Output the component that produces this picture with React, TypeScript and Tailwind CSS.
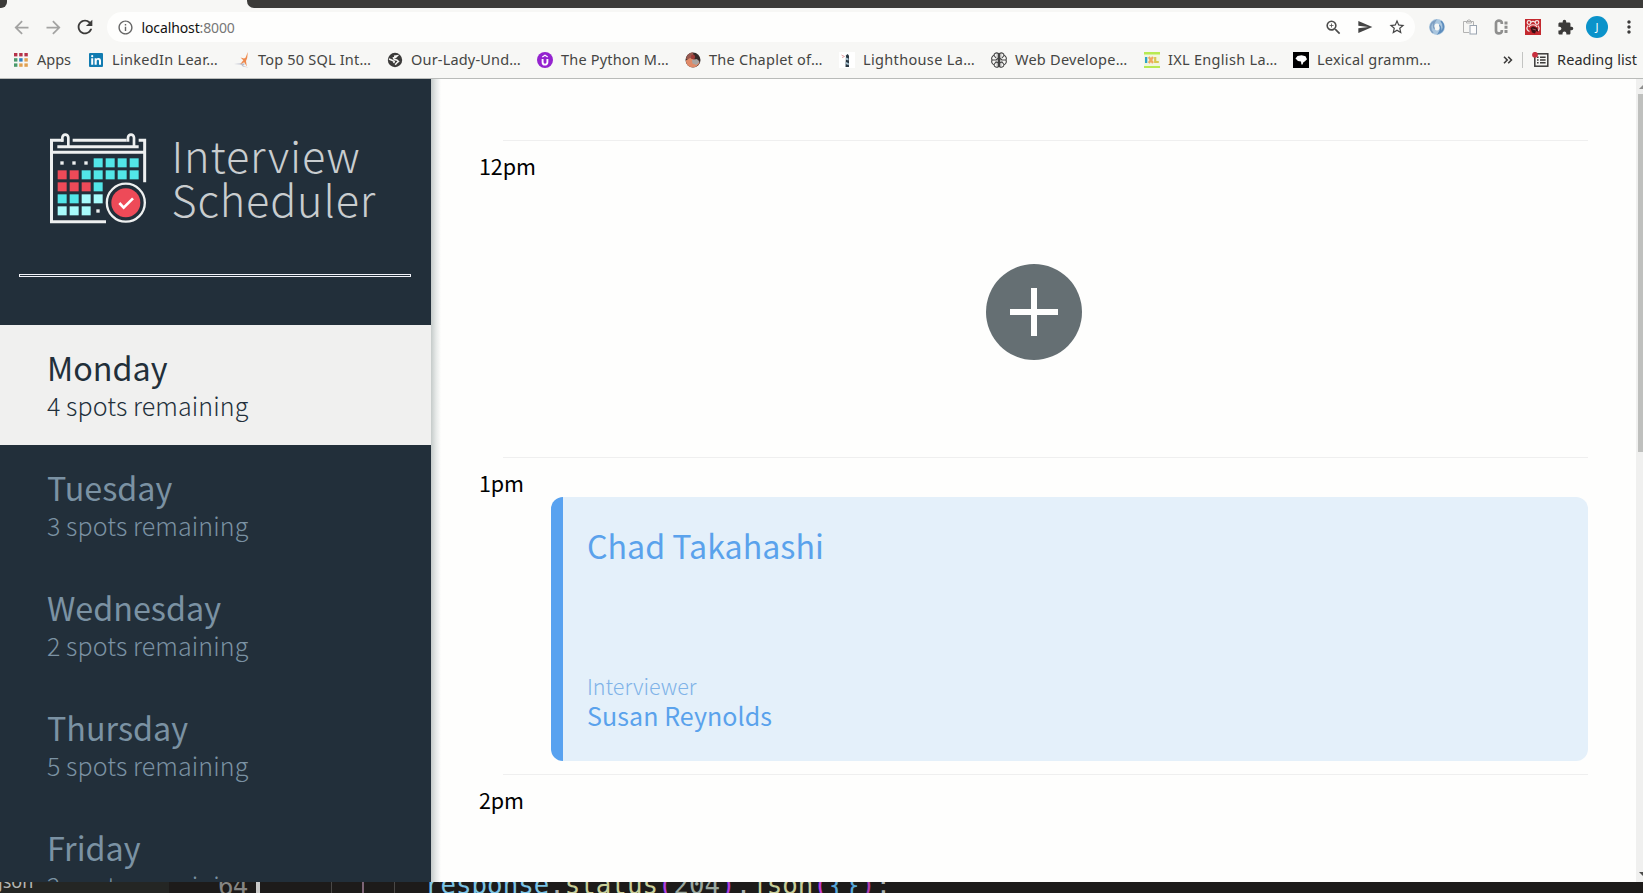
import type { ReactNode } from 'react';
import {
  MdArrowBack,
  MdArrowForward,
  MdRefresh,
  MdInfoOutline,
  MdZoomIn,
  MdSend,
  MdStarBorder,
  MdExtension,
  MdMoreVert,
} from 'react-icons/md';

const UI = "font-['Noto_Sans',sans-serif]";
const APP = "font-['Noto_Sans_CJK_SC',sans-serif]";

function Cell({ children }: { children: ReactNode }) {
  return <div className="flex w-8 shrink-0 items-center justify-center">{children}</div>;
}

function AppsIcon() {
  const colors = ['#b5324a', '#b5324a', '#b5324a', '#4a9a6a', '#2f7fc0', '#e0a050', '#4a9a6a', '#e0a050', '#e0a050'];
  return (
    <svg width="16" height="16" viewBox="0 0 16 16">
      {colors.map((c, i) => (
        <rect key={i} x={1 + (i % 3) * 5.2} y={1 + Math.floor(i / 3) * 5.2} width="3.4" height="3.4" fill={c} />
      ))}
    </svg>
  );
}

function LinkedInIcon() {
  return (
    <svg width="16" height="16" viewBox="0 0 16 16">
      <rect x="1" y="1" width="14" height="14" rx="1" fill="#127cb1" />
      <path d="M3.2 6.2h2v6.6h-2zM3.1 4.2a1.1 1.1 0 1 0 2.2 0a1.1 1.1 0 1 0-2.2 0M6.6 6.2h1.9v.9c.9-1.5 4.5-1.6 4.5 1.6v4.1h-2V9.2c0-1.900-2.300-1.700-2.300 0v3.600h-2.100z" fill="#fff" />
    </svg>
  );
}

function FigureIcon() {
  return (
    <svg width="16" height="16" viewBox="0 0 16 16">
      <path d="M0 12l8-.8 3 .5-2 2.300 6 1.500-6-.8-2-2.200z" fill="#b9bccb" />
      <path d="M13.800 0l-.6 6-1.200 3 .8 5.500-2.600-4.300-4.200 2.300 3.300-4.200L6.500 5.500l3.500 1 1.500-.8z" fill="#ee8a4e" />
    </svg>
  );
}

function GlobeIcon() {
  return (
    <svg width="16" height="16" viewBox="0 0 16 16">
      <circle cx="8" cy="8" r="7.200" fill="#3c3b3a" />
      <path d="M7 4.200l3.200-.4-1.700 1.700-2 .4.800 1.700 2.500.3 1.700 1.600-1.800 1.500-1.500 1.800M2 7l3 1.200 2.200 1.300-.4 1.700" fill="none" stroke="#f7f7f5" strokeWidth="1.500" />
    </svg>
  );
}

function UdemyIcon() {
  return (
    <svg width="16" height="16" viewBox="0 0 16 16">
      <circle cx="8" cy="8" r="8" fill="#9423cf" />
      <path d="M5.600 7v3.200c0 3.200 4.800 3.200 4.800 0V7" fill="none" stroke="#fff" strokeWidth="1.900" />
      <path d="M5.300 4.900L8 3.300l2.700 1.600" fill="none" stroke="#fff" strokeWidth="1.200" />
    </svg>
  );
}

function PortraitIcon() {
  return (
    <svg width="16" height="16" viewBox="0 0 16 16">
      <circle cx="8" cy="8" r="7.500" fill="#352a29" />
      <path d="M1 7c1-5 4-6.500 7-6.500L9 5 5 8z" fill="#9a5a50" />
      <path d="M.8 8.500L5 6l4 1.500 4.500 1 1 2c-2 5-6 5-8 4.800C3 14.500 1 12 .8 8.500z" fill="#e08a68" />
      <path d="M7 8l5-1 2.500 3-3 3-4-1.500z" fill="#a8a4a2" />
      <circle cx="8" cy="5" r="2.200" fill="#a03c38" />
    </svg>
  );
}

function LighthouseIcon() {
  return (
    <svg width="16" height="16" viewBox="0 0 16 16">
      <rect width="16" height="16" fill="#fff" />
      <path d="M2.500 3l3 1.500-2.500 1" fill="none" stroke="#e3a5a8" strokeWidth="1" />
      <path d="M7 3.500L8.500 2 10 3.500V15H6.500z" fill="#2a3843" />
      <path d="M7 5.500l2.500 1v2l-2.500-.8zM7 10l2.800 1.200v2L6.700 12z" fill="#a9c4d2" />
    </svg>
  );
}

function BrainIcon() {
  return (
    <svg width="16" height="16" viewBox="0 0 16 16">
      <rect x="5.500" y="1.500" width="5" height="13" fill="#bdbdbc" />
      <g fill="none" stroke="#444" strokeWidth="1.100">
        <path d="M7.500 1.500C5 0 3 1.500 3 3.300.8 4 .2 6.500 1 8c-.8 2 0 4 2 4.700C3.200 15 6 16 7.500 14.500z" />
        <path d="M8.500 1.500C11 0 13 1.500 13 3.300c2.200.7 2.800 3.200 2 4.700.8 2 0 4-2 4.700C12.800 15 10 16 8.500 14.500z" />
        <path d="M3 3.500l2 2.500M1 8h4l2.500-2M3 12.500L5 10l2.500 1M13 3.500L11 6M15 8h-4L8.500 6M13 12.500L11 10l-2.500 1" />
      </g>
    </svg>
  );
}

function IxlIcon() {
  return (
    <svg width="16" height="16" viewBox="0 0 16 16">
      <rect width="16" height="16" fill="#f1f6df" />
      <rect width="16" height="2.500" fill="#b7ea52" />
      <rect y="14" width="16" height="2" fill="#b7ea52" />
      <rect x="1" y="5" width="2.300" height="6" fill="#2fa3c8" />
      <path d="M4.800 5l4.200 6M9 5l-4.200 6" stroke="#f0a860" strokeWidth="2.200" />
      <path d="M11.200 5v5h3.600" fill="none" stroke="#d8c850" strokeWidth="2.200" />
    </svg>
  );
}

function LexicalIcon() {
  return (
    <svg width="16" height="16" viewBox="0 0 16 16">
      <rect width="16" height="16" fill="#000" />
      <path d="M2.500 6.500L4.500 4l4-.8 4 1 1.500 3-2 2-1.800 1.200-.6 2.100H8.400L8 9.500 5 9z" fill="#fff" />
    </svg>
  );
}

const bookmarks: { label: string; icon: ReactNode; box: string; text: string }[] = [
  { label: 'Apps', icon: <AppsIcon />, box: 'w-[75px]', text: '' },
  { label: 'LinkedIn Lear…', icon: <LinkedInIcon />, box: 'w-[146px]', text: 'tracking-[0.3px]' },
  { label: 'Top 50 SQL Int…', icon: <FigureIcon />, box: 'w-[153px]', text: 'tracking-[0.2px]' },
  { label: 'Our-Lady-Und…', icon: <GlobeIcon />, box: 'w-[150px]', text: 'tracking-[0.18px]' },
  { label: 'The Python M…', icon: <UdemyIcon />, box: 'w-[148px]', text: 'tracking-[0.18px]' },
  { label: 'The Chaplet of…', icon: <PortraitIcon />, box: 'w-[154px]', text: 'tracking-[0.25px]' },
  { label: 'Lighthouse La…', icon: <LighthouseIcon />, box: 'w-[152px]', text: 'tracking-[0.34px]' },
  { label: 'Web Develope…', icon: <BrainIcon />, box: 'w-[153px]', text: 'tracking-[0.25px]' },
  { label: 'IXL English La…', icon: <IxlIcon />, box: 'w-[149px]', text: 'tracking-[0.3px]' },
  { label: 'Lexical gramm…', icon: <LexicalIcon />, box: 'w-[146px]', text: 'tracking-[0.22px]' },
];

function BrowserChrome() {
  return (
    <header className={`${UI} h-[79px] shrink-0 border-b border-[#b9bbb9] bg-[#f7f7f5]`}>
      <div className="flex h-2 justify-between">
        <div className="w-[7px] rounded-br-[6px] bg-[#3c3b39]" />
        <div className="w-[1396px] rounded-bl-[7px] bg-[#3c3b39]" />
      </div>
      <div className="flex h-[38px] items-center overflow-hidden pl-[5px] text-[#3c3b3a]">
        <Cell><MdArrowBack size={21} color="#a3a3a2" /></Cell>
        <Cell><MdArrowForward size={21} color="#a3a3a2" /></Cell>
        <Cell><MdRefresh size={22} /></Cell>
        <div className="ml-1.5 flex h-[30px] w-[1308px] shrink-0 items-center rounded-full bg-[#fefefd] pr-0.5">
          <MdInfoOutline size={17} color="#666" className="ml-[9.500px]" />
          <span className="ml-2 flex-1 text-[14px] tracking-[-0.12px] text-[#111]">
            localhost<span className="text-[#777]">:8000</span>
          </span>
          <Cell><MdZoomIn size={19} color="#4c4c4b" /></Cell>
          <Cell><MdSend size={16} color="#444" /></Cell>
          <Cell><MdStarBorder size={18} color="#444" /></Cell>
        </div>
        <div className="ml-1.5 flex shrink-0">
          <Cell>
            <svg width="16" height="16" viewBox="0 0 16 16">
              <circle cx="8" cy="8" r="5.400" fill="none" stroke="#a9c6df" strokeWidth="5" />
              <path d="M4 14C0 10 1 4 6 2c-2 3-2 6 0 8" fill="none" stroke="#7f9fc2" strokeWidth="1.600" />
              <path d="M12 2c4 4 3 10-2 12 2-3 2-6 0-8" fill="none" stroke="#5d8dbd" strokeWidth="1.600" />
              <ellipse cx="8" cy="8" rx="2.300" ry="3.400" fill="#f7f7f5" />
            </svg>
          </Cell>
          <Cell>
            <svg width="16" height="16" viewBox="0 0 16 16" fill="none" stroke="#b3b3b2" className="ml-0.5">
              <path d="M7 13.500H1.500v-11h10V6M4.500 4V2.500L6 1h2l1.500 1.500V4z" />
              <rect x="8" y="6.500" width="6.500" height="8.500" stroke="#9aa4b0" fill="#fdfdfd" />
            </svg>
          </Cell>
          <Cell>
            <svg width="16" height="16" viewBox="0 0 16 16" fill="none">
              <path d="M8.800 5V3.800C8.800 1 3 .8 3 4v8c0 3.200 5.800 3 5.800.2V11" stroke="#8f8f8e" strokeWidth="2.700" />
              <path d="M13 2.500v3M13 6.700v3M13 10.900v3" stroke="#8f8f8e" strokeWidth="3" />
            </svg>
          </Cell>
          <Cell>
            <svg width="16" height="16" viewBox="0 0 16 16">
              <rect width="16" height="16" fill="#c4292f" />
              <g fill="none" stroke="#f3e3e2" strokeWidth="1.200">
                <circle cx="4" cy="3.500" r="1.800" />
                <circle cx="12" cy="3.500" r="1.800" />
                <path d="M3 6.500c-2 3-1 5 1.500 6M13 6.500c1.500 2 1.300 4 0 5.500M6 3.500c1-1.500 3-1.500 4 0M4 8c1-3 7-3 8 0" />
              </g>
              <path d="M5.500 9L8 7.500l4 1.500 1.500 4-2.500-1-1 2.500-3-1z" fill="#3a1015" />
              <path d="M7.500 10l3.500 1" stroke="#a05a5a" />
            </svg>
          </Cell>
          <Cell><MdExtension size={17} color="#3c3b3a" /></Cell>
          <Cell>
            <div className="flex size-[22px] items-center justify-center rounded-full bg-[#0b93ca] text-[11px] text-white">J</div>
          </Cell>
          <Cell><MdMoreVert size={20} /></Cell>
        </div>
      </div>
      <nav className="flex h-7 items-center pl-[13px] text-[14.500px] whitespace-nowrap text-[#454543]">
        {bookmarks.map((b) => (
          <div key={b.label} className={`flex shrink-0 items-center gap-2 ${b.box}`}>
            <span className="shrink-0">{b.icon}</span>
            <span className={b.text}>{b.label}</span>
          </div>
        ))}
        <div className="ml-auto flex items-center pr-[6px] text-[#2b2b2a]">
          <svg width="10" height="8" viewBox="0 0 10 8" fill="none" stroke="#3c3b3a" strokeWidth="1.600">
            <path d="M1 .8L4.200 4 1 7.200M5.200.8L8.400 4 5.200 7.200" />
          </svg>
          <div className="ml-[9px] h-4 w-px bg-[#c3c4c2]" />
          <svg className="mr-2 ml-[9px]" width="17" height="16" viewBox="0 0 17 16">
            <rect x="2.800" y="1.800" width="13" height="12.400" fill="none" stroke="#3c3b3a" strokeWidth="1.500" />
            <path d="M5 5.200h1.600M5 8h1.600M5 10.800h1.600M8 5.200h5.600M8 8h5.600M8 10.800h5.600" stroke="#3c3b3a" strokeWidth="1.400" />
            <circle cx="3" cy="2.800" r="2.900" fill="#c8303f" />
          </svg>
          <span className="tracking-[0.05px]">Reading list</span>
        </div>
      </nav>
    </header>
  );
}

const cellRows = ['...cccc', 'rrccccc', 'rrrc', 'ccll', 'lll.'];
const cellFill: Record<string, string> = { c: '#52e6e8', r: '#ee4a58', l: '#a8fbfb' };

function CalendarLogo() {
  return (
    <svg width="100" height="96" viewBox="144 90 300 288" className="shrink-0">
      <g fill="none" stroke="#eef0f0" strokeWidth="9">
        <path d="M190 121H154.500V365H318M416 121H434V247M218 121H380M172 140H416M154 157H434" />
        <path d="M187 125v-12a8 8 0 0 1 18 0v27M384 125v-12a8 8 0 0 1 18 0v27" strokeWidth="8" />
      </g>
      {cellRows.map((row, r) =>
        row.split('').map((k, c) =>
          k === '.' ? (
            <rect key={`${r}-${c}`} x={181 + c * 36} y={184 + r * 36} width="10" height="10" fill="#eef0f0" />
          ) : (
            <rect key={`${r}-${c}`} x={173 + c * 36} y={175 + r * 36} width="27" height="27" fill={cellFill[k]} />
          ),
        ),
      )}
      <circle cx="377.500" cy="308" r="57" fill="#222f3a" stroke="#eef0f0" strokeWidth="7" />
      <circle cx="377.500" cy="308" r="43.500" fill="#ee4a58" />
      <path d="M358 309l13 14 28-28" fill="none" stroke="#fff" strokeWidth="8" />
    </svg>
  );
}

const days = [
  { name: 'Monday', spots: '4 spots remaining', selected: true },
  { name: 'Tuesday', spots: '3 spots remaining' },
  { name: 'Wednesday', spots: '2 spots remaining' },
  { name: 'Thursday', spots: '5 spots remaining' },
  { name: 'Friday', spots: '2 spots remaining' },
];

function Sidebar() {
  return (
    <aside className="z-10 w-[431px] shrink-0 overflow-hidden bg-[#222f3a]">
      <div className="flex h-[195px] pt-[51px] pl-12">
        <CalendarLogo />
        <div className="ml-[23.500px] pt-0.5 text-[43.200px] leading-[44px] font-light text-[#c9cdcf]">
          <div className="tracking-[0.850px]">Interview</div>
          <div className="tracking-[0.850px]">Scheduler</div>
        </div>
      </div>
      <div className="mx-[19px] h-[3px] w-[392px] border border-[#f2f2f8]" />
      <ul className="mt-12">
        {days.map((d) => (
          <li
            key={d.name}
            className={`h-[120px] pt-6 pl-[47px] ${d.selected ? 'bg-[#f0f0ef] text-[#222f3a]' : 'text-[#7b92a3]'}`}
          >
            <h2 className="text-[32.300px] leading-9">{d.name}</h2>
            <h3 className="mt-[5px] text-[25px] leading-[30px] font-light tracking-[0.100px]">{d.spots}</h3>
          </li>
        ))}
      </ul>
    </aside>
  );
}

function Slot({ time, children }: { time: string; children?: ReactNode }) {
  return (
    <article className="h-[317px] pr-12 pl-12">
      <div className="ml-6 h-px bg-[#efefef]" />
      <h4 className="mt-2.5 h-[29px] text-[21.500px] leading-[30px] tracking-[-0.100px] text-black">{time}</h4>
      {children}
    </article>
  );
}

function Schedule() {
  return (
    <main className="flex-1 overflow-hidden bg-[#fefefd] pt-[61px]">
      <Slot time="12pm">
        <div className="flex h-[264px] items-center justify-center">
          <svg width="96" height="96" viewBox="0 0 96 96">
            <circle cx="48" cy="48" r="48" fill="#656f73" />
            <path d="M48 24v48M24 48h48" stroke="#fefefd" strokeWidth="6" />
          </svg>
        </div>
      </Slot>
      <Slot time="1pm">
        <div className="ml-[72px] flex h-[264px] flex-col rounded-xl border-l-[12px] border-[#58a2f0] bg-[#e4f0fa] pt-7 pb-[31px] pl-6 text-[#5aa2ec]">
          <h2 className="text-[32.200px] leading-10">Chad Takahashi</h2>
          <h4 className="mt-auto text-[21.500px] leading-7 font-light text-[#7fb3e8]">Interviewer</h4>
          <h3 className="text-[25px] leading-[30px] tracking-[0.080px]">Susan Reynolds</h3>
        </div>
      </Slot>
      <Slot time="2pm" />
    </main>
  );
}

function Scrollbar() {
  return (
    <div className="flex w-[7px] shrink-0 flex-col items-end bg-[#f0f0ef]">
      <svg width="4" height="15" viewBox="0 0 4 15">
        <path d="M4 6v4H0z" fill="#8f8f8e" />
      </svg>
      <div className="h-[358px] w-[5px] bg-[#bfc0be]" />
      <svg className="mt-auto" width="4" height="14" viewBox="0 0 4 14">
        <path d="M0 4h4v4z" fill="#4d4d4c" />
      </svg>
    </div>
  );
}

function EditorStrip() {
  return (
    <footer className="flex h-[11px] shrink-0 overflow-hidden bg-[#1d1b1a] font-['DejaVu_Sans_Mono',monospace] text-[25.800px] leading-[30px] whitespace-pre">
      <div className={`${UI} h-[11px] w-[169px] shrink-0 overflow-hidden bg-[#242624] text-[18px] text-[#b4b6b4]`}>
        <div className="-mt-4 -ml-[2px]">json</div>
      </div>
      <div className="-mt-[11px] w-[87px] pl-[49px] tracking-[-0.900px] text-[#858583]">64</div>
      <div className="h-[11px] w-1 bg-[#c9c9c8]" />
      <div className="ml-[71px] h-[11px] w-px bg-[#494847]" />
      <div className="ml-[30px] h-[11px] w-0.5 bg-[#7d6577]" />
      <div className="ml-[30px] h-[11px] w-px bg-[#494847]" />
      <div className="-mt-[12px] ml-[30px] text-[#c9cf9a]">
        <span className="text-[#7cc4e6]">response</span>
        <span className="text-[#a9b0b0]">.</span>status<span className="text-[#b13fe0]">(</span>
        <span className="text-[#9aa8a0]">204</span>
        <span className="text-[#b13fe0]">)</span>
        <span className="text-[#a9b0b0]">.</span>json<span className="text-[#c43fe0]">(</span>
        <span className="text-[#58a9dd]">{'{}'}</span>
        <span className="text-[#b13fb0]">)</span>
        <span className="text-[#a9b0b0]">;</span>
      </div>
    </footer>
  );
}

export default function App() {
  return (
    <div className="flex h-[893px] w-[1643px] flex-col overflow-hidden">
      <BrowserChrome />
      <div className={`${APP} flex h-[803px] shrink-0`}>
        <Sidebar />
        <div className="z-10 -mr-2.5 w-2.5 shrink-0 bg-linear-to-r from-[#c5cbca] via-[#e6e9e8] to-[#fefefd]" />
        <Schedule />
        <Scrollbar />
      </div>
      <EditorStrip />
    </div>
  );
}
